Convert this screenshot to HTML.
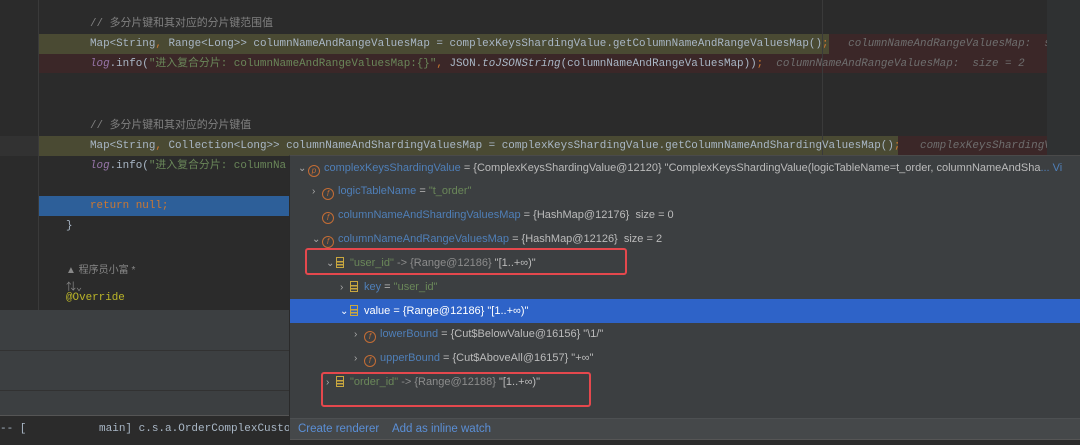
<!DOCTYPE html>
<html><head><meta charset="utf-8"><style>
*{margin:0;padding:0;box-sizing:border-box}
body{width:1080px;height:445px;overflow:hidden;background:#2b2b2b;position:relative;font-family:"Liberation Mono","Noto Sans CJK SC",monospace;}
.clip{position:absolute;left:0;top:0;width:1047px;height:310px;overflow:hidden}
.a{position:absolute;white-space:nowrap}
.code{font-size:10.9px;color:#a9b7c6;line-height:20px;height:20px}
.cm{color:#808080}
.it{font-style:italic;color:#9876aa}
.str{color:#6a8759}
.or{color:#cc7832}
.hint{color:#6e6e6e;font-style:italic}
.pop{position:absolute;left:289px;top:155px;width:791px;height:290px;background:#3c3f41;border-left:1px solid #2a2a2a;border-top:1px solid #4a4a4a;overflow:hidden}
.r{position:absolute;left:0;height:24px;line-height:24px;font-family:"Liberation Sans",sans-serif;font-size:11px;color:#bbbbbb;white-space:nowrap}
.n{color:#4f7fb8}
.g{color:#6a8759}
.gr{color:#8c8c8c}
.ic{display:inline-block;width:12px;height:12px;border:1.3px solid #c46d35;border-radius:50%;color:#c46d35;font-size:8px;line-height:9px;text-align:center;vertical-align:-2px;margin-right:4px;font-style:italic}
.st{display:inline-block;width:8px;height:11px;border:1.5px solid #c9a73f;vertical-align:-2px;margin-right:6px;background:linear-gradient(#c9a73f,#c9a73f) 0 3px/100% 1.5px no-repeat,linear-gradient(#c9a73f,#c9a73f) 0 6px/100% 1.5px no-repeat}
.ar{display:inline-block;width:10px;color:#aaa;font-size:10px}
.box{position:absolute;border:2px solid #e5484d;border-radius:3px}
</style></head><body>
<div class="clip">
<div class="a" style="left:38px;top:0;width:1px;height:310px;background:#3a3a3a"></div>
<div class="a" style="left:0;top:136px;width:38px;height:20px;background:#323232"></div>
<div class="a" style="left:39px;top:34px;width:790px;height:20px;background:#4a4a33"></div>
<div class="a" style="left:829px;top:34px;width:218px;height:20px;background:#3b2728"></div>
<div class="a" style="left:39px;top:54px;width:1008px;height:19px;background:#3b2728"></div>
<div class="a" style="left:39px;top:136px;width:859px;height:20px;background:#4a4a33"></div>
<div class="a" style="left:898px;top:136px;width:149px;height:20px;background:#3b2728"></div>
<div class="a" style="left:39px;top:196px;width:250px;height:20px;background:#2d5f99"></div>
<div class="a" style="left:822px;top:0;width:1px;height:155px;background:#3a3a3a"></div>

<div class="a code cm" style="left:90px;top:14px">// 多分片键和其对应的分片键范围值</div>
<div class="a code" style="left:90px;top:34px">Map&lt;String<span class="or">,</span> Range&lt;Long&gt;&gt; columnNameAndRangeValuesMap = complexKeysShardingValue.getColumnNameAndRangeValuesMap()<span class="or">;</span> &nbsp;<span class="hint">&nbsp;columnNameAndRangeValuesMap: &nbsp;si</span></div>
<div class="a code" style="left:90px;top:54px"><span class="it">log</span>.info(<span class="str">"进入复合分片: columnNameAndRangeValuesMap:{}"</span><span class="or">,</span> JSON.<i>toJSONString</i>(columnNameAndRangeValuesMap))<span class="or">;</span> &nbsp;<span class="hint">columnNameAndRangeValuesMap: &nbsp;size = 2</span></div>
<div class="a code cm" style="left:90px;top:116px">// 多分片键和其对应的分片键值</div>
<div class="a code" style="left:90px;top:136px">Map&lt;String<span class="or">,</span> Collection&lt;Long&gt;&gt; columnNameAndShardingValuesMap = complexKeysShardingValue.getColumnNameAndShardingValuesMap()<span class="or">;</span> &nbsp;<span class="hint">&nbsp;complexKeysShardingVa</span></div>
<div class="a code" style="left:90px;top:156px"><span class="it">log</span>.info(<span class="str">"进入复合分片: columnNa</span></div>
<div class="a code or" style="left:90px;top:196px">return null;</div>
<div class="a code" style="left:66px;top:216px">}</div>
<div class="a" style="left:66px;top:261px;font-size:10px;color:#888;font-family:'Liberation Sans','Noto Sans CJK SC',sans-serif">▲ 程序员小富 *</div>
<div class="a" style="left:66px;top:278px;font-size:10px;color:#888">⇅⌄</div>
<div class="a code" style="left:66px;top:288px;color:#bbb529">@Override</div>
</div>
<div class="a" style="left:1047px;top:0;width:33px;height:155px;background:#2f3132"></div>

<div class="a" style="left:0;top:310px;width:289px;height:107px;background:#3c3f41"></div>
<div class="a" style="left:0;top:350px;width:289px;height:1px;background:#323232"></div>
<div class="a" style="left:0;top:390px;width:289px;height:1px;background:#323232"></div>
<div class="a" style="left:0;top:415px;width:289px;height:30px;background:#2b2b2b;border-top:1px solid #555;overflow:hidden"><div class="a code" style="left:0;top:3px;font-size:11px">-- [ &nbsp; &nbsp; &nbsp; &nbsp; &nbsp; main] c.s.a.OrderComplexCusto</div></div>

<div class="pop">
<div class="r" style="top:0"><span class="ar" style="margin-left:8px">⌄</span><span class="ic">p</span><span class="n">complexKeysShardingValue</span> = {ComplexKeysShardingValue@12120} "ComplexKeysShardingValue(logicTableName=t_order, columnNameAndSha<span class="n">... Vi</span></div>
<div class="r" style="top:23px"><span class="ar" style="margin-left:22px">›</span><span class="ic">f</span><span class="n">logicTableName</span> = <span class="g">"t_order"</span></div>
<div class="r" style="top:47px"><span style="margin-left:32px"></span><span class="ic">f</span><span class="n">columnNameAndShardingValuesMap</span> = {HashMap@12176} &nbsp;size = 0</div>
<div class="r" style="top:71px"><span class="ar" style="margin-left:22px">⌄</span><span class="ic">f</span><span class="n">columnNameAndRangeValuesMap</span> = {HashMap@12126} &nbsp;size = 2</div>
<div class="r" style="top:95px"><span class="ar" style="margin-left:36px">⌄</span><span class="st"></span><span class="g">"user_id"</span> <span class="gr">-&gt; {Range@12186}</span> "[1..+∞)"</div>
<div class="r" style="top:119px"><span class="ar" style="margin-left:50px">›</span><span class="st"></span><span class="n">key</span> = <span class="g">"user_id"</span></div>
<div class="r" style="top:143px;width:791px;background:#2e63c8;color:#fff"><span class="ar" style="margin-left:50px;color:#fff">⌄</span><span class="st"></span>value = {Range@12186} "[1..+∞)"</div>
<div class="r" style="top:166px"><span class="ar" style="margin-left:64px">›</span><span class="ic">f</span><span class="n">lowerBound</span> = {Cut$BelowValue@16156} "\1/"</div>
<div class="r" style="top:190px"><span class="ar" style="margin-left:64px">›</span><span class="ic">f</span><span class="n">upperBound</span> = {Cut$AboveAll@16157} "+∞"</div>
<div class="r" style="top:214px"><span class="ar" style="margin-left:36px">›</span><span class="st"></span><span class="g">"order_id"</span> <span class="gr">-&gt; {Range@12188}</span> "[1..+∞)"</div>
<div class="a" style="left:0;top:262px;width:791px;height:21px;background:#45484a;border-top:1px solid #4d5052"></div>
<div class="r" style="top:261px;left:8px;color:#5b8fd6;font-size:11.5px">Create renderer &nbsp; &nbsp;Add as inline watch</div>
<div class="a" style="left:0;top:283px;width:791px;height:7px;background:#2b2b2b;border-top:1px solid #555"></div>
</div>
<div class="box" style="left:305px;top:248px;width:322px;height:27px"></div>
<div class="box" style="left:321px;top:372px;width:270px;height:35px"></div>
</body></html>
